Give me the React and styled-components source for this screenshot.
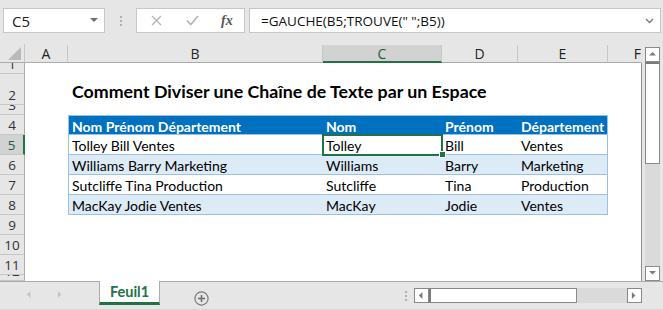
import React from "react"
import styled, { createGlobalStyle } from "styled-components"

const GlobalStyle = createGlobalStyle`
	html, body {
		margin: 0;
		padding: 0;
		background: #e6e6e6;
	}
	body {
		font-family: "Open Sans", "Liberation Sans", sans-serif;
	}
`

const green = "#217346"
const tableLine = "#9bc2e6"
const cellFont = `"Lato", "Liberation Sans", sans-serif`

const Window = styled.div`
	width: 663px;
	height: 310px;
	display: flex;
	flex-direction: column;
	background: #e6e6e6;
	overflow: hidden;
`

const FormulaBar = styled.div`
	height: 44px;
	box-sizing: border-box;
	padding: 8px 0 0 3px;
	display: flex;
	align-items: flex-start;
`

const Box = styled.div`
	height: 25px;
	box-sizing: border-box;
	background: #fff;
	border: 1px solid #c6c6c6;
	display: flex;
	align-items: center;
`

const NameBox = styled(Box)`
	width: 102px;
	padding: 0 6px 0 8px;
	justify-content: space-between;
	font-size: 15px;
	color: #222;
`

const Grip = styled.div`
	width: 31px;
	height: 25px;
	display: flex;
	flex-direction: column;
	align-items: center;
	justify-content: center;
	gap: 2px;

	span {
		width: 2px;
		height: 2px;
		background: #b0b0b0;
	}
`

const FxBox = styled(Box)`
	width: 109px;
	padding: 0 0 0 1px;
`

const FxIcon = styled.span`
	width: 36px;
	display: flex;
	justify-content: center;
`

const FxText = styled.span`
	font-family: "Liberation Serif", serif;
	font-style: italic;
	font-weight: bold;
	font-size: 14px;
	color: #555;
	margin-left: 11px;
`

const FormulaInput = styled(Box)`
	width: 412px;
	margin-left: 4px;
	padding: 0 6px 0 11px;
	justify-content: space-between;
	font-size: 13.5px;
	color: #111;
`

const SheetArea = styled.div`
	height: 237px;
	display: flex;
`

const Grid = styled.div`
	width: 642px;
	display: grid;
	grid-template-columns: 25px 43px 255px 119px 76px 90px 34px;
	grid-template-rows: 19px 11px 31px 10px repeat(8, 20px) 6px;
	overflow: hidden;
	font-family: ${cellFont};
`

const Corner = styled.div`
	background: #e6e6e6;
	border-right: 1px solid #c6c6c6;
	border-bottom: 1px solid #ababab;
	display: flex;
	align-items: flex-end;
	justify-content: flex-end;
	padding: 0 3px 2px 0;
`

const ColHead = styled.div`
	background: ${(p) => (p.$active ? "#d2d2d2" : "#e6e6e6")};
	border-right: 1px solid ${(p) => (p.$last ? "transparent" : "#c6c6c6")};
	border-bottom: ${(p) => (p.$active ? `2px solid ${green}` : "1px solid #ababab")};
	box-sizing: border-box;
	display: flex;
	align-items: center;
	justify-content: ${(p) => (p.$last ? "flex-end" : "center")};
	font-family: "Open Sans", "Liberation Sans", sans-serif;
	font-size: 14px;
	color: ${(p) => (p.$active ? "#1f5f3b" : "#222")};
	overflow: hidden;
	margin-top: 1px;
`

const RowHead = styled.div`
	background: ${(p) => (p.$active ? "#d2d2d2" : "#e6e6e6")};
	border-right: ${(p) => (p.$active ? `2px solid ${green}` : "1px solid #ababab")};
	border-bottom: 1px solid #c6c6c6;
	box-sizing: border-box;
	display: flex;
	align-items: flex-end;
	justify-content: center;
	font-family: "Open Sans", "Liberation Sans", sans-serif;
	font-size: 13.5px;
	line-height: 18px;
	color: ${(p) => (p.$active ? "#1f5f3b" : "#333")};
	overflow: hidden;
`

const Cell = styled.div`
	position: relative;
	background: #fff;
	border-right: ${(p) => (p.$edge ? "1px solid #8f8f8f" : "none")};
	box-sizing: border-box;
`

const Title = styled(Cell)`
	display: flex;
	align-items: flex-end;
	padding: 0 0 3px 4px;
	white-space: nowrap;
	font-weight: bold;
	font-size: 17.8px;
	color: #000;
	overflow: visible;
	z-index: 1;
`

const TableCell = styled.div`
	position: relative;
	box-sizing: border-box;
	display: flex;
	align-items: center;
	padding: 2px 0 0 3px;
	white-space: nowrap;
	font-size: 14px;
	background: ${(p) => (p.$head ? "#0070c0" : p.$band ? "#ddebf7" : "#fff")};
	color: ${(p) => (p.$head ? "#fff" : "#000")};
	font-weight: ${(p) => (p.$head ? "bold" : "normal")};
	border-top: ${(p) => (p.$head ? `1px solid ${tableLine}` : "none")};
	border-bottom: 1px solid ${tableLine};
	border-left: ${(p) => (p.$first ? `1px solid ${tableLine}` : "none")};
	border-right: ${(p) => (p.$last ? `1px solid ${tableLine}` : "none")};
`

const Selection = styled.div`
	position: absolute;
	z-index: 2;
	top: -1px;
	left: -1px;
	right: -1px;
	bottom: -2px;
	border: 2px solid ${green};
	pointer-events: none;
`

const FillHandle = styled.div`
	position: absolute;
	right: -5px;
	bottom: -4px;
	width: 5px;
	height: 5px;
	background: ${green};
	border: 1px solid #fff;
`

const VScroll = styled.div`
	width: 15px;
	margin: 3px 0 0 3px;
	display: flex;
	flex-direction: column;
	background: #dadada;
`

const ScrollButton = styled.div`
	width: 15px;
	height: 15px;
	box-sizing: border-box;
	background: #fff;
	border: 1px solid #8a8a8a;
	display: flex;
	align-items: center;
	justify-content: center;
	flex-shrink: 0;
`

const VThumb = styled.div`
	height: 102px;
	box-sizing: border-box;
	background: #fff;
	border: 1px solid #8a8a8a;
	border-top: 2px solid #7a7a7a;
`

const Track = styled.div`
	flex: 1;
`

const TabBar = styled.div`
	height: 29px;
	box-sizing: border-box;
	border-top: 1px solid #ababab;
	border-bottom: 1px solid #d6d6d6;
	display: flex;
	align-items: flex-start;
`

const NavArrows = styled.div`
	width: 99px;
	height: 24px;
	display: flex;
	align-items: center;
	padding-left: 26px;
	box-sizing: border-box;
	gap: 24px;
`

const SheetTab = styled.div`
	width: 61px;
	height: 24px;
	box-sizing: border-box;
	margin-top: -1px;
	background: #fff;
	border-left: 1px solid #ababab;
	border-right: 1px solid #ababab;
	border-bottom: 3px solid ${green};
	display: flex;
	align-items: center;
	justify-content: center;
	font-family: ${cellFont};
	font-weight: bold;
	font-size: 14.5px;
	color: ${green};
`

const AddSheet = styled.div`
	margin: 7px 0 0 34px;
	width: 15px;
	height: 15px;
`

const HGrip = styled(Grip)`
	height: 14px;
	width: 16px;
	margin: 7px 0 0 189px;
`

const HScroll = styled.div`
	width: 228px;
	height: 15px;
	margin: 6px 0 0 0;
	display: flex;
	background: #dadada;
`

const HThumb = styled.div`
	width: 148px;
	box-sizing: border-box;
	background: #fff;
	border: 1px solid #8a8a8a;
	border-left: 2px solid #7a7a7a;
`

const Tri = ({ dir, color = "#7a7a7a", size = 7 }) => {
	const pts = {
		up: "0,5 4,1 8,5",
		down: "0,1 4,5 8,1",
		left: "5,0 1,4 5,8",
		right: "1,0 5,4 1,8",
	}[dir]
	return (
		<svg width={size} height={size} viewBox="0 0 8 8">
			<polygon points={pts} fill={color} />
		</svg>
	)
}

const columns = ["A", "B", "C", "D", "E", "F"]

const table = [
	["Nom Prénom Département", "Nom", "Prénom", "Département"],
	["Tolley Bill Ventes", "Tolley", "Bill", "Ventes"],
	["Williams Barry Marketing", "Williams", "Barry", "Marketing"],
	["Sutcliffe Tina Production", "Sutcliffe", "Tina", "Production"],
	["MacKay Jodie Ventes", "MacKay", "Jodie", "Ventes"],
]

const renderRow = (n) => {
	const tableIndex = n - 4
	const inTable = tableIndex >= 0 && tableIndex < table.length
	return (
		<React.Fragment key={n}>
			<RowHead $active={n === 5}>{n}</RowHead>
			<Cell />
			{n === 2 ? (
				<>
					<Title>Comment Diviser une Chaîne de Texte par un Espace</Title>
					<Cell />
					<Cell />
					<Cell />
				</>
			) : inTable ? (
				table[tableIndex].map((text, i) => (
					<TableCell
						key={i}
						$head={tableIndex === 0}
						$band={tableIndex === 2 || tableIndex === 4}
						$first={i === 0}
						$last={i === 3}
					>
						{text}
						{n === 5 && i === 1 && (
							<Selection>
								<FillHandle />
							</Selection>
						)}
					</TableCell>
				))
			) : (
				<>
					<Cell />
					<Cell />
					<Cell />
					<Cell />
				</>
			)}
			<Cell $edge />
		</React.Fragment>
	)
}

const App = () => (
	<Window>
		<GlobalStyle />
		<FormulaBar>
			<NameBox>
				<span>C5</span>
				<Tri dir="down" color="#6f6f6f" size={8} />
			</NameBox>
			<Grip>
				<span />
				<span />
				<span />
			</Grip>
			<FxBox>
				<FxIcon>
					<svg width="11" height="11" viewBox="0 0 11 11">
						<path d="M1 1 L10 10 M10 1 L1 10" stroke="#b4b4b4" strokeWidth="1.3" />
					</svg>
				</FxIcon>
				<FxIcon>
					<svg width="13" height="11" viewBox="0 0 13 11">
						<path d="M1 5.5 L4.8 9.5 L12 1" fill="none" stroke="#b4b4b4" strokeWidth="1.6" />
					</svg>
				</FxIcon>
				<FxText>fx</FxText>
			</FxBox>
			<FormulaInput>
				<span>=GAUCHE(B5;TROUVE(" ";B5))</span>
				<svg width="9" height="6" viewBox="0 0 9 6">
					<path d="M1 1 L4.5 4.5 L8 1" fill="none" stroke="#7a7a7a" strokeWidth="1.4" />
				</svg>
			</FormulaInput>
		</FormulaBar>
		<SheetArea>
			<Grid>
				<Corner>
					<svg width="13" height="13" viewBox="0 0 13 13">
						<polygon points="13,0 13,13 0,13" fill="#b9b9b9" />
					</svg>
				</Corner>
				{columns.map((c) => (
					<ColHead key={c} $active={c === "C"} $last={c === "F"}>
						{c}
					</ColHead>
				))}
				{Array.from({ length: 12 }, (_, i) => renderRow(i + 1))}
			</Grid>
			<VScroll>
				<ScrollButton>
					<Tri dir="up" />
				</ScrollButton>
				<VThumb />
				<Track />
				<ScrollButton>
					<Tri dir="down" />
				</ScrollButton>
			</VScroll>
		</SheetArea>
		<TabBar>
			<NavArrows>
				<Tri dir="left" color="#c4c4c4" />
				<Tri dir="right" color="#c4c4c4" />
			</NavArrows>
			<SheetTab>Feuil1</SheetTab>
			<AddSheet>
				<svg width="15" height="15" viewBox="0 0 15 15">
					<circle cx="7.5" cy="7.5" r="6.6" fill="none" stroke="#7a7a7a" strokeWidth="1.2" />
					<path d="M7.5 4 V11 M4 7.5 H11" stroke="#6a6a6a" strokeWidth="1.5" />
				</svg>
			</AddSheet>
			<HGrip>
				<span />
				<span />
				<span />
			</HGrip>
			<HScroll>
				<ScrollButton>
					<Tri dir="left" />
				</ScrollButton>
				<HThumb />
				<Track />
				<ScrollButton>
					<Tri dir="right" />
				</ScrollButton>
			</HScroll>
		</TabBar>
	</Window>
)

export default App
